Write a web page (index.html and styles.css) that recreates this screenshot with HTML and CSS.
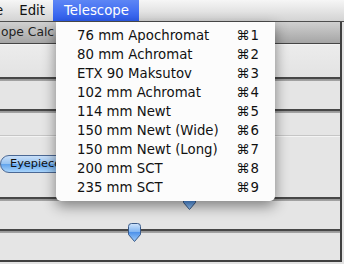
FILE: index.html
```html
<!DOCTYPE html>
<html>
<head>
  <meta charset="utf-8">
  <meta name="viewport" content="width=device-width">
  <title>Telescope menu</title>
  <link rel="stylesheet" href="styles.css">
</head>
<body>

  <div class="menubar">
    <span class="mb-item first">File</span>
    <span class="mb-item">Edit</span>
    <span class="mb-item active">Telescope</span>
  </div>

  <div class="window">
    <div class="titlebar"><span class="title">ope Calc</span></div>
    <div class="pane">
      <div class="row r1"></div>
      <div class="track"></div>
      <div class="row r2"></div>
      <div class="track"></div>
      <div class="row r3"></div>
      <div class="row r4"><button class="aqua">Eyepiece</button></div>
      <div class="track">
        <svg class="thumb" style="left:182px" width="15" height="19" viewBox="0 0 15 19"><use href="#thumb"/></svg>
      </div>
      <div class="row r5"></div>
      <div class="track">
        <svg class="thumb" style="left:127px" width="15" height="19" viewBox="0 0 15 19"><use href="#thumb"/></svg>
      </div>
      <div class="row r6"></div>
    </div>
  </div>

  <ul class="menu">
    <li><span>76 mm Apochromat</span><span class="key">&#8984;1</span></li>
    <li><span>80 mm Achromat</span><span class="key">&#8984;2</span></li>
    <li><span>ETX 90 Maksutov</span><span class="key">&#8984;3</span></li>
    <li><span>102 mm Achromat</span><span class="key">&#8984;4</span></li>
    <li><span>114 mm Newt</span><span class="key">&#8984;5</span></li>
    <li><span>150 mm Newt (Wide)</span><span class="key">&#8984;6</span></li>
    <li><span>150 mm Newt (Long)</span><span class="key">&#8984;7</span></li>
    <li><span>200 mm SCT</span><span class="key">&#8984;8</span></li>
    <li><span>235 mm SCT</span><span class="key">&#8984;9</span></li>
  </ul>

  <svg class="defs" width="0" height="0">
    <defs>
      <linearGradient id="thumbfill" x1="0" y1="0" x2="0" y2="1">
        <stop offset="0" stop-color="#d2e5fb"/>
        <stop offset="0.45" stop-color="#82b6f2"/>
        <stop offset="0.5" stop-color="#4f93ea"/>
        <stop offset="1" stop-color="#9fcdfa"/>
      </linearGradient>
      <path id="thumb" d="M1.5 3.5 Q1.5 0.5 4.5 0.5 H10.5 Q13.5 0.5 13.5 3.5 V11.5 L7.5 18.5 L1.5 11.5 Z" fill="url(#thumbfill)" stroke="#3a5a88" stroke-width="1"/>
    </defs>
  </svg>

</body>
</html>
```

FILE: styles.css
```css
html, body {
  margin: 0;
  padding: 0;
}

body {
  position: relative;
  width: 344px;
  height: 264px;
  overflow: hidden;
  background: #e2e2e2;
  font-family: "DejaVu Sans", Verdana, sans-serif;
  color: #111;
}

.defs {
  position: absolute;
}

/* menu bar */

.menubar {
  display: flex;
  height: 21px;
  background: linear-gradient(#f6f6f6, #d3d3d3);
  border-bottom: 1px solid #4e4e4e;
  font-size: 13.3px;
  line-height: 21px;
}

.mb-item {
  padding: 0 8px;
  white-space: nowrap;
}

.mb-item.first {
  margin-left: -27px;
}

.mb-item.active {
  padding: 0 10px 0 11px;
  color: #fff;
  background: linear-gradient(#5d86f5, #2d5cee);
}

/* window */

.window {
  width: 340px;
  border-right: 2px solid #3f3f3f;
}

.titlebar {
  height: 21px;
  background: linear-gradient(#d0d0d0, #a5a5a5);
  border-bottom: 1px solid #454545;
  font-size: 12.3px;
  line-height: 21px;
  color: #222;
  white-space: nowrap;
  overflow: hidden;
}

.title {
  padding-left: 1px;
}

.pane {
  display: flex;
  flex-direction: column;
  background: #e5e5e5;
  border-bottom: 2px solid #3f3f3f;
}

.row {
  position: relative;
}

.r1 {
  height: 33px;
  background: linear-gradient(#ececec, #e3e3e3);
  border-top: 1px solid #f2f2f2;
  box-sizing: border-box;
}

.r2 { height: 28px; }

.r3 {
  height: 23px;
  border-bottom: 1px solid #c6c6c6;
  box-sizing: border-box;
}

.r4 {
  height: 61px;
  border-top: 1px solid #f4f4f4;
  box-sizing: border-box;
  padding-top: 18px;
}

.r5 { height: 28px; }
.r6 { height: 27px; }

.track {
  position: relative;
  height: 4px;
  background: linear-gradient(#474747 0, #474747 2px, #939393 2px, #a6a6a6 4px);
}

.thumb {
  position: absolute;
  top: -6px;
  display: block;
}

/* aqua push button */

.aqua {
  display: block;
  height: 18px;
  width: 90px;
  margin: 0;
  padding: 0 0 0 9px;
  text-align: left;
  border: 1px solid #4b6894;
  border-radius: 9px;
  background: linear-gradient(#c9dff8 0, #96c3f2 48%, #62a4ec 52%, #a8d4fb 100%);
  font-family: "DejaVu Sans", Verdana, sans-serif;
  font-size: 11.3px;
  line-height: 16px;
  color: #111;
}

/* dropdown menu */

.menu {
  position: absolute;
  left: 56px;
  top: 22px;
  width: 219px;
  margin: 0;
  padding: 4px 0;
  list-style: none;
  background: #fcfcfc;
  border-radius: 0 0 5px 5px;
  box-shadow: 0 5px 14px rgba(0, 0, 0, 0.45);
  font-size: 13.3px;
}

.menu li {
  display: flex;
  justify-content: space-between;
  height: 19px;
  line-height: 19px;
  padding: 0 15px 0 21px;
  white-space: nowrap;
}

.menu .key {
  letter-spacing: 1px;
}
```
